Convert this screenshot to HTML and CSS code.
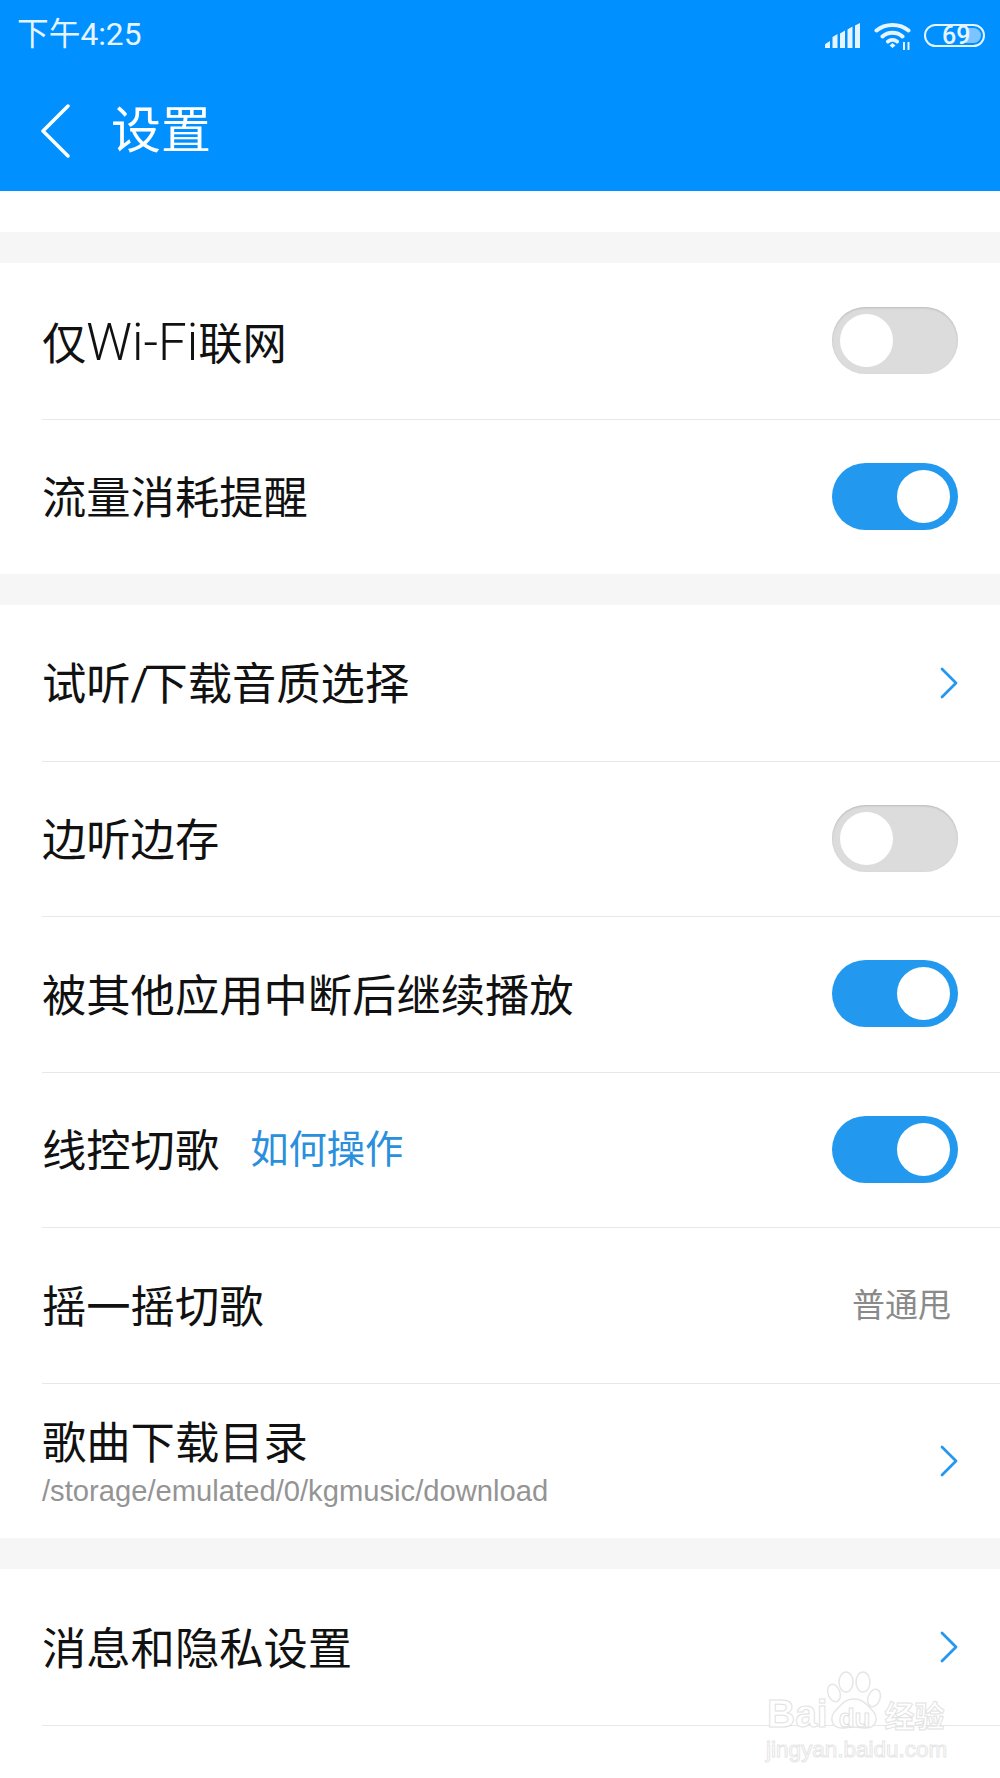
FILE: index.html
```html
<!DOCTYPE html>
<html lang="zh-CN">
<head>
    <meta charset="UTF-8">
    <meta name="viewport" content="width=device-width, initial-scale=1.0">
    <title>设置</title>
    <link rel="stylesheet" href="styles.css">
</head>
<body>
    <header class="app-header">
        <div class="status-bar">
            <span class="status-time">下午4:25</span>
            <div class="status-icons">
                <svg class="icon-signal" viewBox="0 0 35 25" width="35" height="25">
                    <path d="M0 25v-3q0-1 1-1.500l4-2.500v7zM7.500 25v-11l5-3v14zM15 25v-14.500l5-3v17.500zM22.500 25v-18.500l5-3v21.500zM30 25v-22.500l5-2.500v25z" fill="#e6f4ff"/>
                </svg>
                <svg class="icon-wifi" viewBox="0 0 38 29" width="38" height="29">
                    <path d="M2.500 9.500C11 2 26 2 34.500 9.500M8.500 15.500C14 10.500 23 10.500 28.500 15.500M14 20.500C16.500 18.500 20.500 18.500 23 20.500" fill="none" stroke="#e6f4ff" stroke-width="4" stroke-linecap="round"/>
                    <path d="M15.500 24.500l3-2.500 3 2.500-3 2.500z" fill="#e6f4ff"/>
                    <path d="M30 21v8M34.500 21v8" stroke="#e6f4ff" stroke-width="2"/>
                </svg>
                <div class="battery">
                    <div class="battery-fill"></div>
                    <span class="battery-num">69</span>
                </div>
            </div>
        </div>
        <div class="title-bar">
            <svg class="back-icon" viewBox="0 0 30 54" width="30" height="54">
                <path d="M28 2L3 27l25 25" fill="none" stroke="#fff" stroke-width="3.500" stroke-linecap="round" stroke-linejoin="round"/>
            </svg>
            <h1 class="page-title">设置</h1>
        </div>
    </header>

    <div class="top-gap"></div>

    <section class="group">
        <div class="row">
            <span class="row-label">仅<span class="latin">Wi-Fi</span>联网</span>
            <div class="toggle"><div class="knob"></div></div>
        </div>
        <div class="row">
            <span class="row-label">流量消耗提醒</span>
            <div class="toggle on"><div class="knob"></div></div>
        </div>
    </section>

    <section class="group">
        <div class="row">
            <span class="row-label">试听<span class="slash">/</span>下载音质选择</span>
            <svg class="chevron" viewBox="0 0 18 32" width="18" height="32"><path d="M2 2l14 14L2 30" fill="none" stroke="#2299ee" stroke-width="2.800" stroke-linecap="round" stroke-linejoin="round"/></svg>
        </div>
        <div class="row">
            <span class="row-label">边听边存</span>
            <div class="toggle"><div class="knob"></div></div>
        </div>
        <div class="row">
            <span class="row-label">被其他应用中断后继续播放</span>
            <div class="toggle on"><div class="knob"></div></div>
        </div>
        <div class="row">
            <div class="row-main">
                <span class="row-label">线控切歌</span>
                <span class="row-link">如何操作</span>
            </div>
            <div class="toggle on"><div class="knob"></div></div>
        </div>
        <div class="row">
            <span class="row-label">摇一摇切歌</span>
            <span class="row-value">普通甩</span>
        </div>
        <div class="row row-path">
            <div class="row-stack">
                <span class="row-label">歌曲下载目录</span>
                <span class="row-sub">/storage/emulated/0/kgmusic/download</span>
            </div>
            <svg class="chevron" viewBox="0 0 18 32" width="18" height="32"><path d="M2 2l14 14L2 30" fill="none" stroke="#2299ee" stroke-width="2.800" stroke-linecap="round" stroke-linejoin="round"/></svg>
        </div>
    </section>

    <section class="group">
        <div class="row">
            <span class="row-label">消息和隐私设置</span>
            <svg class="chevron" viewBox="0 0 18 32" width="18" height="32"><path d="M2 2l14 14L2 30" fill="none" stroke="#2299ee" stroke-width="2.800" stroke-linecap="round" stroke-linejoin="round"/></svg>
        </div>
        <div class="row row-end"></div>
    </section>

    <!-- watermark over the page -->
    <div class="watermark">
        <svg class="wm-paw" viewBox="0 0 60 62" width="60" height="62">
            <g fill="#fff" stroke="#e6e6e6" stroke-width="1.500">
                <ellipse cx="9" cy="23" rx="6" ry="9" transform="rotate(-20 9 23)"/>
                <ellipse cx="21" cy="12" rx="7" ry="10"/>
                <ellipse cx="38" cy="12" rx="7" ry="10"/>
                <ellipse cx="49" cy="28" rx="6" ry="9" transform="rotate(20 49 28)"/>
                <path d="M29 29c-9 0-12 5-18 11-7 7-5 18 6 18 4 0 8-1 12-1s8 1 12 1c11 0 13-11 6-18-6-6-9-11-18-11z"/>
            </g>
        </svg>
        <div class="wm-brand">
            <span class="wm-bai">Bai</span><span class="wm-du">du</span><span class="wm-jy">经验</span>
        </div>
        <div class="wm-url">jingyan.baidu.com</div>
    </div>
</body>
</html>
```

FILE: styles.css
```css
* {
    box-sizing: border-box;
    margin: 0;
    padding: 0;
}

body {
    width: 1000px;
    height: 1778px;
    overflow: hidden;
    position: relative;
    background: #fff;
    font-family: "Roboto", "Noto Sans CJK SC", sans-serif;
    color: #111;
}

/* Header */
.app-header {
    height: 191px;
    background: #0090ff;
    color: #fff;
}

.status-bar {
    height: 70px;
    padding: 0 15px 0 17px;
    display: flex;
    justify-content: space-between;
    align-items: center;
}

.status-time {
    font-size: 31.7px;
    line-height: 40px;
    color: #e6f4ff;
}

.status-icons {
    display: flex;
    align-items: center;
}

.icon-signal {
    margin-right: 14px;
}

.icon-wifi {
    margin-right: 12px;
}

.battery {
    width: 61px;
    height: 23px;
    border: 2px solid #e6f4ff;
    border-radius: 12px;
    padding: 2px;
    position: relative;
}

.battery-fill {
    width: 100%;
    height: 100%;
    border-radius: 8px;
    background: linear-gradient(to right, #0090ff 0 72%, #7cc4ff 72%);
}

.battery-num {
    position: absolute;
    left: 16px;
    top: -5px;
    font-size: 25px;
    font-weight: 500;
    line-height: 29px;
    color: #e6f4ff;
}

.title-bar {
    height: 121px;
    padding: 0 0 0 40px;
    display: flex;
    align-items: center;
}

.back-icon {
    margin-right: 41px;
}

.page-title {
    font-size: 50px;
    font-weight: 400;
    line-height: 60px;
}

.top-gap {
    height: 41px;
}

/* List */
.group {
    border-top: 31px solid #f6f6f6;
}

.row {
    height: 155.5px;
    margin-left: 42px;
    padding-right: 42px;
    border-bottom: 1px solid #e8e8e8;
    display: flex;
    justify-content: space-between;
    align-items: center;
}

.group .row:first-child {
    height: 157px;
}

.group .row:last-child {
    height: 153.5px;
    border-bottom: none;
}

.group .row-path:last-child {
    height: 154.5px;
}

.group .row-end:last-child {
    height: 52px;
}

.row-label {
    padding-top: 5px;
    font-size: 44.3px;
    line-height: 54px;
}

.latin {
    font-size: 51px;
    font-weight: 300;
}

.slash {
    letter-spacing: -5.500px;
}

.row-main {
    display: flex;
    align-items: center;
}

.row-link {
    margin-left: 31px;
    font-size: 38.3px;
    line-height: 48px;
    padding-top: 1px;
    color: #2a8fdc;
}

.row-value {
    margin-right: 7px;
    font-size: 33px;
    line-height: 42px;
    padding-top: 2px;
    color: #8a8a8a;
}

.row-stack {
    display: flex;
    flex-direction: column;
}

.row-sub {
    margin-top: 2px;
    font-size: 29.2px;
    line-height: 36px;
    color: #949494;
    font-family: "Liberation Sans", sans-serif;
}

/* Toggle */
.toggle {
    width: 126px;
    height: 67px;
    margin-top: -1px;
    border-radius: 34px;
    background: #dcdcdc;
    box-shadow: inset 0 1px 2px #bbb;
    padding: 7px 8px;
    display: flex;
}

.toggle.on {
    background: #2299ee;
    box-shadow: none;
    justify-content: flex-end;
}

.knob {
    width: 53px;
    height: 53px;
    border-radius: 50%;
    background: #fff;
}

/* Watermark */
.watermark {
    position: absolute;
    left: 765px;
    top: 1670px;
    width: 180px;
    height: 100px;
}

.wm-paw {
    position: absolute;
    left: 60px;
    top: 0;
}

.wm-brand {
    position: absolute;
    left: 2px;
    top: 20px;
    font-family: "Liberation Sans", "Noto Sans CJK SC", sans-serif;
    font-size: 39px;
    font-weight: 700;
    line-height: 48px;
    color: #fff;
    -webkit-text-stroke: 1px #e2e2e2;
    white-space: nowrap;
}

.wm-du {
    margin-left: 11px;
    font-size: 26px;
}

.wm-jy {
    margin-left: 14px;
    font-size: 30px;
}

.wm-url {
    position: absolute;
    left: 1px;
    top: 66px;
    font-family: "Liberation Sans", sans-serif;
    font-size: 22.5px;
    line-height: 28px;
    color: #fff;
    -webkit-text-stroke: 1px #e6e6e6;
    white-space: nowrap;
}
```
